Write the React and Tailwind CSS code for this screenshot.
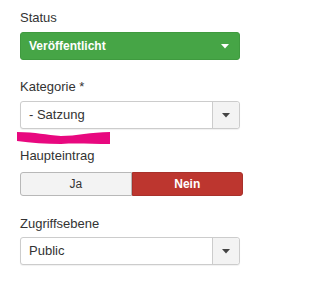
import React from "react";

function Caret({ color }) {
  return (
    <svg width="8" height="5" viewBox="0 0 8 5" className="block">
      <path d="M0 0 L8 0 L4 4.5 Z" fill={color} />
    </svg>
  );
}

function Select({ value }) {
  return (
    <div className="flex w-[220px] h-[28px] rounded-[3px] border border-[#cccccc] bg-white shadow-[0_1px_1px_rgba(0,0,0,0.06)]">
      <div className="flex-1 flex items-center pl-[8px] text-[13px] text-[#333333]">{value}</div>
      <div className="w-[27px] flex items-center justify-center border-l border-[#cccccc] bg-[#f3f3f3] rounded-r-[3px]">
        <Caret color="#444444" />
      </div>
    </div>
  );
}

export default function App() {
  return (
    <div className="w-[309px] h-[285px] bg-white pl-[20px] pt-[9px]" style={{ fontFamily: '"Liberation Sans", Arial, sans-serif' }}>
      <div className="text-[13px] leading-[18px] text-[#333333]">Status</div>
      <div className="mt-[5px] flex items-center w-[220px] h-[28px] rounded-[3px] border border-[#3f9a3f] bg-[#46a546] pl-[8px] pr-[10px]">
        <span className="flex-1 text-[12px] font-bold text-white">Veröffentlicht</span>
        <Caret color="#ffffff" />
      </div>

      <div className="mt-[18px] text-[13px] leading-[18px] text-[#333333]">Kategorie *</div>
      <div className="mt-[5px]">
        <Select value="- Satzung" />
      </div>
      <svg width="100" height="18" viewBox="0 0 100 18" className="block ml-[-4px]">
        <path d="M1 3 C20 3 30 6 45 7 C60 7 75 3 94 3 L94 15 C75 15 60 14 45 15 C30 15 15 14 1 12 Z" fill="#e8087f" />
      </svg>

      <div className="text-[13px] leading-[18px] text-[#333333]">Haupteintrag</div>
      <div className="mt-[7px] flex w-[223px] h-[24px] text-[12px]">
        <div className="flex-1 flex items-center justify-center rounded-l-[3px] border border-[#b8b8b8] bg-[#f3f3f3] text-[#333333]">Ja</div>
        <div className="flex-1 flex items-center justify-center rounded-r-[3px] border border-[#a8312b] bg-[#bd362f] font-bold text-white">Nein</div>
      </div>

      <div className="mt-[19px] text-[13px] leading-[18px] text-[#333333]">Zugriffsebene</div>
      <div className="mt-[4px]">
        <Select value="Public" />
      </div>
    </div>
  );
}
